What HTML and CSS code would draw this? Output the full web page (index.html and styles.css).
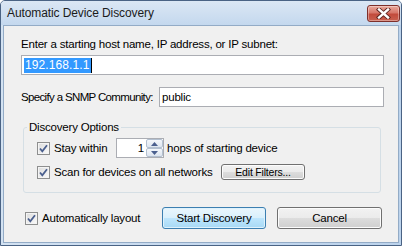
FILE: index.html
```html
<!DOCTYPE html>
<html>
<head>
<meta charset="utf-8">
<link rel="stylesheet" href="styles.css">
</head>
<body>
<div class="window">
  <div class="titlebar">
    <span class="title">Automatic Device Discovery</span>
    <div class="close">
      <svg width="15" height="11" viewBox="0 0 15 11">
        <path d="M3 1.5 L12 9.5 M12 1.5 L3 9.5" stroke="#5a2420" stroke-width="4.2" stroke-linecap="square" fill="none"/>
        <path d="M3 1.5 L12 9.5 M12 1.5 L3 9.5" stroke="#ffffff" stroke-width="2.4" stroke-linecap="square" fill="none"/>
      </svg>
    </div>
  </div>
  <div class="client">
    <div class="label">Enter a starting host name, IP address, or IP subnet:</div>
    <div class="field field-ip"><span class="sel">192.168.1.1</span><span class="caret"></span></div>
    <div class="row2">
      <span class="label2">Specify a SNMP Community:</span>
      <div class="field field-grow">public</div>
    </div>
    <fieldset class="group">
      <legend>Discovery Options</legend>
      <div class="opt-row">
        <span class="check"><svg width="13" height="13" viewBox="0 0 13 13"><path d="M3 6.5 L5.3 9.3 L10 3.2" stroke="#4a5f8e" stroke-width="1.8" fill="none"/></svg></span>
        <span class="opt-label1">Stay within</span>
        <div class="spin">
          <span class="spin-val">1</span>
          <div class="spin-btns">
            <div class="spin-btn"><svg width="7" height="4" viewBox="0 0 7 4"><path d="M0 4 L3.5 0 L7 4 Z" fill="#4a5f8e"/></svg></div>
            <div class="spin-btn"><svg width="7" height="4" viewBox="0 0 7 4"><path d="M0 0 L3.5 4 L7 0 Z" fill="#4a5f8e"/></svg></div>
          </div>
        </div>
        <span class="hops">hops of starting device</span>
      </div>
      <div class="opt-row opt-row2">
        <span class="check"><svg width="13" height="13" viewBox="0 0 13 13"><path d="M3 6.5 L5.3 9.3 L10 3.2" stroke="#4a5f8e" stroke-width="1.8" fill="none"/></svg></span>
        <span class="opt-label2">Scan for devices on all networks</span>
        <div class="btn btn-small">Edit Filters...</div>
      </div>
    </fieldset>
    <div class="bottom">
      <span class="check"><svg width="13" height="13" viewBox="0 0 13 13"><path d="M3 6.5 L5.3 9.3 L10 3.2" stroke="#4a5f8e" stroke-width="1.8" fill="none"/></svg></span>
      <span class="auto-label">Automatically layout</span>
      <div class="btn btn-default">Start Discovery</div>
      <div class="btn btn-cancel">Cancel</div>
    </div>
  </div>
</div>
</body>
</html>
```
FILE: styles.css
```css
body {
  margin: 0;
  background: #ffffff;
  font-family: "Liberation Sans", Arial, sans-serif;
  font-size: 11.5px;
  letter-spacing: -0.2px;
  color: #000;
  white-space: nowrap;
}
.window {
  width: 402px;
  height: 246px;
  box-sizing: border-box;
  border: 1px solid #4a6384;
  border-radius: 5px 5px 0 0;
  background: linear-gradient(90deg, #d3e2f2, #c3d7ee 60%, #bcd3ec);
  display: flex;
  flex-direction: column;
}
.titlebar {
  height: 24px;
  flex: none;
  display: flex;
  align-items: flex-start;
  padding: 0 1px 0 6px;
  background: linear-gradient(#dbe7f4, #c4d8ee);
  border-radius: 4px 4px 0 0;
}
.title {
  line-height: 24px;
  font-size: 12px;
  letter-spacing: -0.1px;
  color: #1b1b1b;
}
.close {
  margin-left: auto;
  margin-top: 4px;
  width: 33px;
  height: 17px;
  box-sizing: border-box;
  border: 1px solid #7e2f2a;
  border-radius: 3px;
  background: linear-gradient(#e9a99c, #d7776a 45%, #c24b3c 55%, #c9604f);
  display: flex;
  align-items: center;
  justify-content: center;
  box-shadow: inset 0 0 0 1px rgba(255,255,255,0.35);
}
.client {
  flex: 1;
  margin: 0 2px 2px;
  border: 1px solid #93abc6;
  background: #f0f0f0;
  padding: 11px 14px 0 17px;
  display: flex;
  flex-direction: column;
}
.label {
  line-height: 15px;
}
.field {
  height: 20px;
  box-sizing: border-box;
  border: 1px solid #abadb3;
  background: #fff;
  display: flex;
  align-items: center;
  padding-left: 2px;
}
.field-ip {
  margin-top: 3px;
}
.sel {
  background: #3399ff;
  color: #fff;
  line-height: 15px;
  padding: 0 1px;
  font-size: 12px;
  letter-spacing: 0.1px;
}
.caret {
  width: 1px;
  height: 15px;
  background: #000;
}
.row2 {
  display: flex;
  align-items: center;
  margin-top: 12px;
  height: 20px;
}
.label2 {
  width: 138px;
  flex: none;
  letter-spacing: -0.65px;
}
.field-grow {
  flex: 1;
  padding-left: 2px;
}
.group {
  margin: 13px 3px 0 2px;
  border: 1px solid #d5dfe5;
  border-radius: 3px;
  padding: 3px 0 10px 0;
  min-width: 0;
}
.group legend {
  margin-left: 3px;
  padding: 0 2px;
  line-height: 15px;
}
.opt-row {
  display: flex;
  align-items: center;
  height: 20px;
  padding-left: 13px;
}
.opt-row2 {
  margin-top: 4px;
}
.check {
  width: 13px;
  height: 13px;
  flex: none;
  box-sizing: border-box;
  border: 1px solid #8e8f8f;
  background: linear-gradient(135deg, #dcdcdc, #fbfbfb);
  box-shadow: inset 0 0 0 1px #f4f4f4;
  margin-right: 4px;
  position: relative;
}
.check svg {
  position: absolute;
  left: -1px;
  top: -1px;
}
.opt-label1 {
  width: 62px;
  flex: none;
}
.spin {
  width: 48px;
  height: 20px;
  box-sizing: border-box;
  border: 1px solid #abadb3;
  background: #fff;
  display: flex;
  flex: none;
}
.spin-val {
  flex: 1;
  text-align: right;
  line-height: 18px;
  padding-right: 2px;
}
.spin-btns {
  width: 17px;
  display: flex;
  flex-direction: column;
}
.spin-btn {
  flex: 1;
  box-sizing: border-box;
  border: 1px solid #b3c0d0;
  border-radius: 2px;
  background: linear-gradient(#f4f7fb, #dde5ef);
  display: flex;
  align-items: center;
  justify-content: center;
}
.hops {
  margin-left: 3px;
}
.opt-label2 {
  width: 167px;
  flex: none;
}
.btn {
  box-sizing: border-box;
  border: 1px solid #707070;
  border-radius: 3px;
  background: linear-gradient(#f2f2f2, #ebebeb 50%, #dddddd 51%, #cfcfcf);
  box-shadow: inset 0 0 0 1px #fcfcfc;
  display: flex;
  align-items: center;
  justify-content: center;
  flex: none;
}
.btn-small {
  width: 84px;
  height: 16px;
  font-size: 10.5px;
}
.bottom {
  display: flex;
  align-items: center;
  height: 22px;
  margin-top: 14px;
  padding-left: 4px;
}
.auto-label {
  width: 120px;
  flex: none;
}
.btn-default {
  width: 104px;
  height: 22px;
  border-color: #3c7fb1;
  background: linear-gradient(#eaf6fd, #d9f0fc 50%, #bee6fd 51%, #a7d9f5);
  box-shadow: inset 0 0 0 1px #dff2fc;
}
.btn-cancel {
  width: 105px;
  height: 22px;
  margin-left: 11px;
}
```
